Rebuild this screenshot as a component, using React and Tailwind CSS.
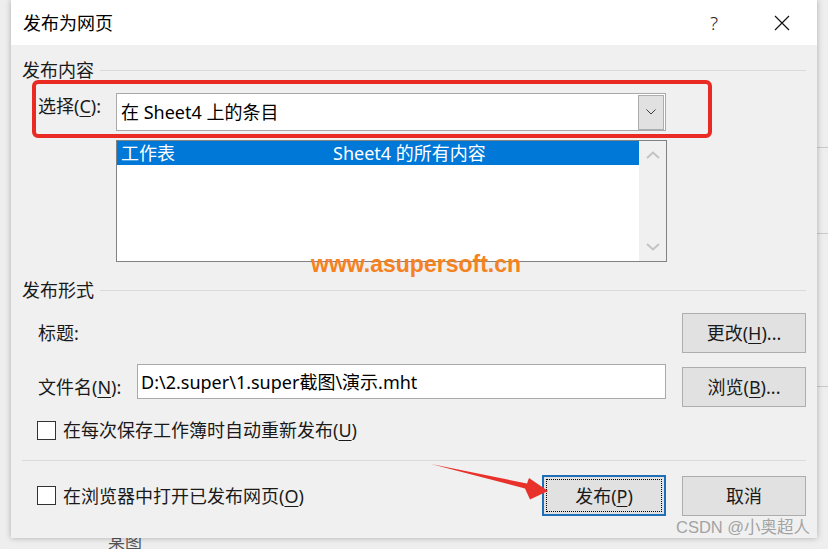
import React from 'react';

const font = "font-['Noto_Sans','Noto_Sans_CJK_SC',sans-serif]";

function Key({ children }) {
  return <span className="underline decoration-1 underline-offset-[3px]">{children}</span>;
}

function Chevron({ up = false, className = '' }) {
  return (
    <svg width="14" height="8" viewBox="0 0 14 8" className={className}>
      <path
        d={up ? 'M1 7 L7 1.5 L13 7' : 'M1 1 L7 6.5 L13 1'}
        fill="none"
        stroke="#c3c3c3"
        strokeWidth="2"
      />
    </svg>
  );
}

function GroupHeader({ label }) {
  return (
    <div className="flex h-[24px] items-center">
      <span className="text-[18px] leading-[24px] text-[#1a1a1a]">{label}</span>
      <div className="ml-[6px] h-px flex-1 bg-[#dadada]" />
    </div>
  );
}

function Button({ children, primary = false }) {
  if (primary) {
    return (
      <div className="flex h-[41px] w-[124px] items-center justify-center border-2 border-[#1f6fb8] bg-[#e1e1e1] p-[2px]">
        <div className="flex h-full w-full items-center justify-center border border-dotted border-black text-[18px] leading-[24px] text-[#1a1a1a]">
          {children}
        </div>
      </div>
    );
  }
  return (
    <div className="flex h-[40px] w-[124px] items-center justify-center border border-[#adadad] bg-[#e1e1e1] text-[18px] leading-[24px] text-[#1a1a1a]">
      {children}
    </div>
  );
}

function CheckRow({ children }) {
  return (
    <div className="flex h-[20px] items-center">
      <div className="h-[19px] w-[19px] border border-[#333333] bg-white" />
      <span className="ml-[7px] text-[18px] leading-[20px] text-[#1a1a1a]">{children}</span>
    </div>
  );
}

export default function App() {
  return (
    <div className={`relative h-[549px] w-[828px] overflow-hidden bg-[#eeeeee] ${font}`}>
      {/* spreadsheet grid peeking out on the right */}
      <div className="absolute right-0 top-[147px] h-px w-[11px] bg-[#c9c9c9]" />
      <div className="absolute right-0 top-[233px] h-px w-[11px] bg-[#c9c9c9]" />
      <div className="absolute right-0 top-[386px] h-px w-[11px] bg-[#c9c9c9]" />

      <div className="relative ml-[11px] flex h-[538px] w-[806px] flex-col bg-[#f0f0f0] shadow-[0_0_6px_rgba(0,0,0,0.28)]">
        {/* title bar */}
        <div className="flex h-[45px] items-center bg-white pl-[12px]">
          <span className="text-[18px] leading-[24px] text-black">发布为网页</span>
          <span className="ml-auto text-[19px] font-light leading-[24px] text-[#222]">?</span>
          <svg width="16" height="16" viewBox="0 0 16 16" className="ml-[56px] mr-[27px]">
            <path d="M1 1 L15 15 M15 1 L1 15" stroke="#111" strokeWidth="1.2" />
          </svg>
        </div>

        <div className="flex flex-col px-[11px]">
          <div className="mt-[13px]">
            <GroupHeader label="发布内容" />
          </div>

          {/* select row */}
          <div className="mt-[11px] flex pl-[16px]">
            <span className="mt-[2px] w-[78px] text-[18px] leading-[22px] text-[#1a1a1a]">
              选择(<Key>C</Key>):
            </span>
            <div className="flex h-[38px] w-[550px] items-center border border-[#a9a9a9] bg-white pl-[4px] pr-px">
              <span className="text-[18px] leading-[24px] text-black">在 Sheet4 上的条目</span>
              <div className="ml-auto flex h-[35px] w-[26px] items-center justify-center border border-[#adadad] bg-[#e1e1e1]">
                <svg width="10" height="6" viewBox="0 0 10 6">
                  <path d="M0.5 0.5 L5 5 L9.5 0.5" fill="none" stroke="#3c3c3c" strokeWidth="1" />
                </svg>
              </div>
            </div>
          </div>

          {/* list box */}
          <div className="ml-[94px] mt-[9px] flex h-[122px] w-[551px] border border-[#828282] bg-white">
            <div className="flex-1">
              <div className="flex h-[24px] items-center bg-[#0078d7] pl-[4px] text-[18px] leading-[24px] text-white">
                <span className="w-[212px]">工作表</span>
                <span>Sheet4 的所有内容</span>
              </div>
            </div>
            <div className="flex w-[27px] flex-col items-center justify-between bg-[#f0f0f0] py-[10px]">
              <Chevron up />
              <Chevron />
            </div>
          </div>

          <div className="mt-[16px]">
            <GroupHeader label="发布形式" />
          </div>

          {/* title row */}
          <div className="mt-[11px] flex items-center justify-between pl-[16px]">
            <span className="text-[18px] leading-[24px] text-[#1a1a1a]">标题:</span>
            <Button>
              更改(<Key>H</Key>)...
            </Button>
          </div>

          {/* file name row */}
          <div className="mt-[11px] flex items-start pl-[16px]">
            <span className="mt-[11px] w-[99px] text-[18px] leading-[24px] text-[#1a1a1a]">
              文件名(<Key>N</Key>):
            </span>
            <div className="flex h-[35px] w-[529px] items-center border border-[#a9a9a9] bg-white pl-[3px]">
              <span className="text-[18px] leading-[24px] text-black">D:\2.super\1.super截图\演示.mht</span>
            </div>
            <div className="ml-auto mt-[3px]">
              <Button>
                浏览(<Key>B</Key>)...
              </Button>
            </div>
          </div>

          <div className="mt-[13px] pl-[15px]">
            <CheckRow>
              在每次保存工作簿时自动重新发布(<Key>U</Key>)
            </CheckRow>
          </div>

          <div className="mt-[20px] h-px bg-[#dadada]" />

          {/* bottom row */}
          <div className="mt-[14px] flex items-center pl-[15px]">
            <CheckRow>
              在浏览器中打开已发布网页(<Key>O</Key>)
            </CheckRow>
            <div className="ml-auto flex items-start gap-[16px]">
              <Button primary>
                发布(<Key>P</Key>)
              </Button>
              <div className="mt-px">
                <Button>取消</Button>
              </div>
            </div>
          </div>
        </div>

        {/* annotations over the dialog */}
        <div className="absolute left-[21px] top-[80px] h-[58px] w-[680px] rounded-[6px] border-[4px] border-[#ea2b24]" />
        <div className="absolute left-[300px] top-[253px] font-['Liberation_Sans',sans-serif] text-[23px] font-bold leading-[23px] text-[#f5821f]">
          www.asupersoft.cn
        </div>
        <div className="absolute left-[665px] top-[516px] text-[16.5px] leading-[22px] text-[#a3a3a3]">
          <span className="font-['Liberation_Sans',sans-serif]">CSDN @</span>小奥超人
        </div>
      </div>

      <svg className="absolute left-0 top-0" width="828" height="549" viewBox="0 0 828 549">
        <polygon
          points="431,464 527,483.5 529,478 548,491 530,499.5 525,488.5"
          fill="#e8312a"
        />
      </svg>

      <div className="h-[11px] overflow-hidden pl-[108px]">
        <div className="-mt-[5px] text-[17px] leading-[18px] text-[#555]">某图</div>
      </div>
    </div>
  );
}
